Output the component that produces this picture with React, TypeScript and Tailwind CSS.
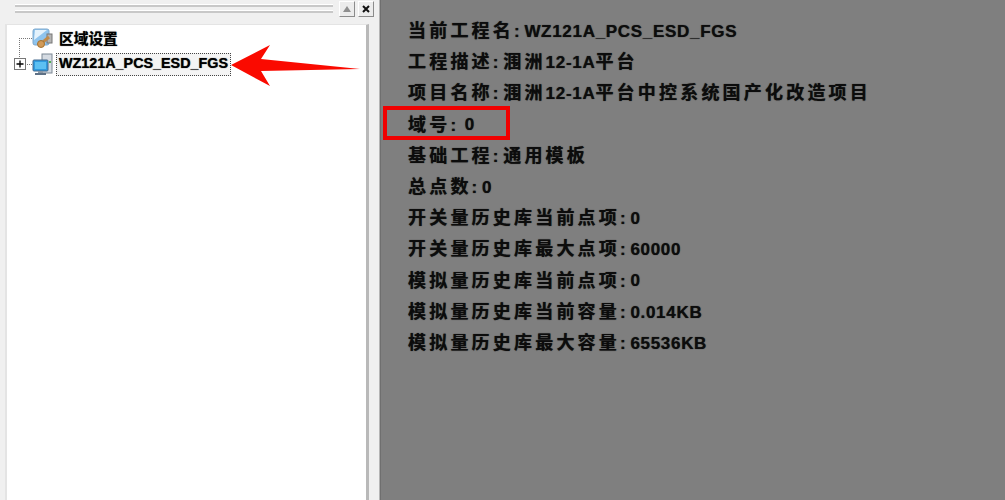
import React from 'react';

const rows = [
  { label: '当前工程名:', value: 'WZ121A_PCS_ESD_FGS' },
  { label: '工程描述:', value: '涠洲12-1A平台' },
  { label: '项目名称:', value: '涠洲12-1A平台中控系统国产化改造项目' },
  { label: '域号:', value: '0', wide: true },
  { label: '基础工程:', value: '通用模板' },
  { label: '总点数:', value: '0' },
  { label: '开关量历史库当前点项:', value: '0' },
  { label: '开关量历史库最大点项:', value: '60000' },
  { label: '模拟量历史库当前点项:', value: '0' },
  { label: '模拟量历史库当前容量:', value: '0.014KB' },
  { label: '模拟量历史库最大容量:', value: '65536KB' },
];

const fontStack = "font-['Liberation_Sans','Noto_Sans_CJK_SC',sans-serif]";

// CJK runs are larger and spaced wider than latin runs in the original
const Spaced = ({ text }: { text: string }) => (
  <>
    {text.split(/([\u4e00-\u9fff]+)/).filter(Boolean).map((part, idx) => (
      <span key={idx} className={/[\u4e00-\u9fff]/.test(part) ? 'text-[18px] tracking-[3.2px]' : 'tracking-[0.7px]'}>
        {part}
      </span>
    ))}
  </>
);

const AreaIcon = () => (
  <svg width="22" height="22" viewBox="0 0 22 22">
    <rect x="1" y="1" width="16" height="16" rx="2" fill="#8fc4ee" stroke="#7ea8cc" />
    <path d="M2 12 L15 2 L3 2 Z" fill="#e4f2fc" />
    <rect x="15" y="6" width="5" height="9" fill="#b5b5b5" stroke="#777" />
    <path d="M11 14 L17 9" stroke="#c08a4a" strokeWidth="3" />
    <circle cx="9" cy="16" r="3.5" fill="#d19a58" stroke="#a5722f" />
  </svg>
);

const ProjectIcon = () => (
  <svg width="22" height="23" viewBox="0 0 22 23">
    <rect x="10" y="1" width="10" height="19" fill="#d5dbe2" stroke="#7b8794" />
    <rect x="17" y="8" width="2" height="2" fill="#4caf50" />
    <rect x="1" y="7" width="15" height="11" rx="1" fill="#2e9be0" stroke="#44688c" />
    <rect x="3" y="9" width="11" height="7" fill="#5cc0f2" />
    <rect x="6" y="18" width="5" height="2" fill="#8b98a6" />
    <rect x="3" y="20" width="11" height="2" fill="#5e7186" />
  </svg>
);

const ToolbarButton = ({ children }: { children: React.ReactNode }) => (
  <div className="w-[16px] h-[16px] flex items-center justify-center bg-[#ececec] border border-t-white border-l-white border-r-[#8c8c8c] border-b-[#8c8c8c]">
    {children}
  </div>
);

export default function App() {
  return (
    <div className={`relative flex w-[1005px] h-[500px] overflow-hidden bg-[#f0f0f0] ${fontStack}`}>
      {/* left pane */}
      <div className="w-[380px] shrink-0 flex flex-col pl-[5px] bg-[#f0f0f0] border-r border-[#b5b5b5]">
        <div className="h-[24px] shrink-0 flex items-start gap-[3px] pt-[1px] pl-[10px]">
          <div className="w-[318px] mt-[3px] flex flex-col gap-[3px] mr-[3px]">
            <div className="h-[3px] bg-[#c8c8c8] border-t border-white" />
            <div className="h-[3px] bg-[#c8c8c8] border-t border-white" />
          </div>
          <ToolbarButton>
            <svg width="10" height="8" viewBox="0 0 10 8"><path d="M5 1 L9 7 L1 7 Z" fill="#8f8f8f" /></svg>
          </ToolbarButton>
          <ToolbarButton>
            <svg width="10" height="10" viewBox="0 0 10 10"><path d="M2 2 L8 8 M8 2 L2 8" stroke="#111" strokeWidth="2" /></svg>
          </ToolbarButton>
        </div>
        <div className="flex-1 w-[364px] bg-white border-r-[3px] border-r-[#b9b9b9] border-t border-t-[#e4e4e4] border-l-2 border-l-[#e4e4e4] pl-[3px] pt-[2px]">
          <div className="relative">
            <div className="flex items-center h-[24px] pl-[22px]">
              <AreaIcon />
              <span className="ml-[5px] text-[14.7px] font-bold text-black [text-shadow:0_0_1px_#333]">区域设置</span>
            </div>
            <div className="flex items-center h-[26px] pl-[22px]">
              <ProjectIcon />
              <span className="ml-[2px] h-[23px] px-[2px] flex items-center text-[14.35px] font-bold text-black bg-[#f4f4f4] border border-dotted border-[#444] [text-shadow:0_0_1px_#333]">
                WZ121A_PCS_ESD_FGS
              </span>
            </div>
            {/* tree connector lines and expander */}
            <div className="absolute left-[9px] top-[11px] h-[27px] w-[13px] border-l border-t border-dotted border-[#777]" />
            <div className="absolute left-[9px] top-[37px] w-[13px] border-t border-dotted border-[#777]" />
            <div className="absolute left-[4px] top-[31px] w-[12px] h-[12px] bg-white border border-[#777] flex items-center justify-center">
              <svg width="8" height="8" viewBox="0 0 8 8"><path d="M0.5 4 H7.5 M4 0.5 V7.5" stroke="#000" strokeWidth="1.3" /></svg>
            </div>
          </div>
        </div>
      </div>

      {/* right pane */}
      <div className="flex-1 bg-[#7f7f7f] border-l border-[#6f6f6f] pl-[27px] pt-[16px]">
        {rows.map((row) => (
          <div key={row.label} className="h-[31.2px] flex items-center text-[17px] font-bold text-[#0c0c0c] whitespace-pre [text-shadow:0_0_1px_#222]">
            <span><Spaced text={row.label} /></span>
            <span className={row.wide ? 'ml-[8px]' : 'ml-[4px]'}><Spaced text={row.value} /></span>
          </div>
        ))}
      </div>

      {/* annotations drawn over the screenshot */}
      <div className="absolute left-[383px] top-[106px] w-[127px] h-[34px] border-[4px] border-[#f00000]" />
      <svg className="absolute left-[230px] top-[44px]" width="132" height="44" viewBox="0 0 132 44">
        <path d="M1 21 L40 1 L31 15 L130 25 L31 27 L40 42 Z" fill="#fa0a00" />
      </svg>
    </div>
  );
}
